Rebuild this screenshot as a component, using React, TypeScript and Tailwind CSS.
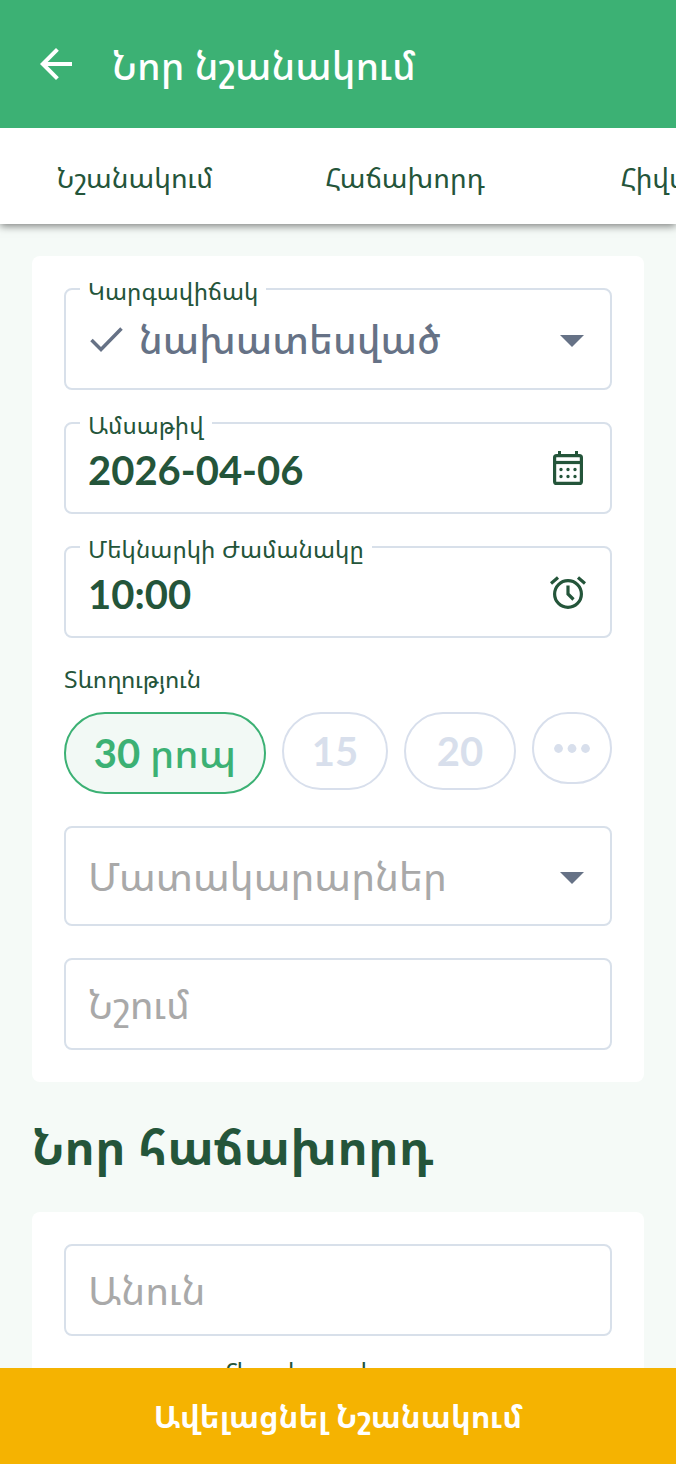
import { useState } from 'react';
import type { ReactNode } from 'react';

const TABS = ['Նշանակում', 'Հաճախորդ', 'Հիվանդ'];

const INPUT =
  'w-full min-w-0 bg-transparent text-[40px] leading-[48px] outline-none placeholder:text-[#a9a9a9] placeholder:opacity-100';

function Field({ id, label, className, children }: {
  id: string;
  label?: string;
  className?: string;
  children: ReactNode;
}) {
  return (
    <div className={`relative flex items-center rounded-lg border-2 border-[#d8e0ea] px-[22px] ${className ?? 'h-[92px]'}`}>
      {label && (
        <label
          htmlFor={id}
          className="absolute -top-[15px] left-[14px] whitespace-nowrap bg-white px-2 text-2xl text-[#24553a]"
        >
          {label}
        </label>
      )}
      {children}
    </div>
  );
}

function Caret() {
  return (
    <svg viewBox="0 0 24 12" className="pointer-events-none absolute right-[26px] top-1/2 -mt-1 h-3 w-6 fill-[#667286]">
      <path d="M0 0h24L12 12z" />
    </svg>
  );
}

function CalendarIcon() {
  return (
    <svg viewBox="0 0 30 34" className="h-[34px] w-[30px]" fill="none" stroke="#24553a">
      <path d="M6.500 0v5M23.500 0v5" strokeWidth="3" />
      <rect x="1.600" y="4.600" width="26.800" height="27.800" rx="2" strokeWidth="3.200" />
      <path d="M1 11.500h28" strokeWidth="3.200" />
      <path d="M8 18.500h0M15 18.500h0M22 18.500h0M8 25.500h0M15 25.500h0M22 25.500h0" strokeWidth="3.400" strokeLinecap="round" />
    </svg>
  );
}

function AlarmIcon() {
  return (
    <svg viewBox="0 0 36 33" className="h-[33px] w-9" fill="none" stroke="#24553a" strokeWidth="3.200">
      <circle cx="18" cy="18" r="13.400" />
      <path d="M18 9.500v8.500l5.500 5.500" />
      <path d="M1 7.500l7-6M35 7.500l-7-6" />
    </svg>
  );
}

export default function App() {
  const [status, setStatus] = useState('planned');
  const [date, setDate] = useState('2026-04-06');
  const [time, setTime] = useState('10:00');
  const [duration, setDuration] = useState(30);
  const [provider, setProvider] = useState('');

  return (
    <div className='flex h-screen flex-col bg-[#f5faf7] font-["Noto_Sans_Armenian",Lato,sans-serif] text-[#24553a]'>
      <header className="relative z-20 flex h-32 shrink-0 items-center bg-[#3cb174] px-10 text-white">
        <button type="button" aria-label="Հետ" className="mr-10">
          <svg viewBox="4 4 16 16" className="h-8 w-8 fill-current">
            <path d="M20 11H7.830l5.590-5.590L12 4l-8 8 8 8 1.410-1.410L7.830 13H20v-2z" />
          </svg>
        </button>
        <h1 className="pt-0.5 text-[39px] font-medium leading-[48px]">Նոր նշանակում</h1>
      </header>

      <nav className="relative z-10 flex h-24 shrink-0 overflow-x-clip bg-white shadow-[0_2px_8px_rgba(0,0,0,0.5)]">
        {TABS.map((tab) => (
          <button key={tab} type="button" className="w-[270px] shrink-0 pt-0.5 text-[28px]">
            {tab}
          </button>
        ))}
      </nav>

      <main className="min-h-0 flex-1 overflow-y-auto px-8 pt-8 [scrollbar-width:none]">
        <section className="flex flex-col gap-8 rounded-lg bg-white p-8">
          <Field id="status" label="Կարգավիճակ" className="h-[102px]">
            <svg viewBox="0 0 33 25" className="ml-0.5 mr-4 h-[25px] w-[33px] shrink-0" fill="none" stroke="#667286" strokeWidth="3.500">
              <path d="M1.500 13l9.500 9.500L31.500 1.500" />
            </svg>
            <select
              id="status"
              value={status}
              onChange={(e) => setStatus(e.target.value)}
              className="w-full min-w-0 appearance-none bg-transparent text-[39px] font-medium leading-[60px] text-[#667286] outline-none"
            >
              <option value="planned">նախատեսված</option>
            </select>
            <Caret />
          </Field>

          <Field id="date" label="Ամսաթիվ">
            <input
              id="date"
              value={date}
              onChange={(e) => setDate(e.target.value)}
              className={`${INPUT} pt-1 font-[Lato] font-bold`}
            />
            <button type="button" aria-label="Ընտրել ամսաթիվ" className="mr-0.5 flex w-9 shrink-0 justify-center">
              <CalendarIcon />
            </button>
          </Field>

          <Field id="time" label="Մեկնարկի Ժամանակը">
            <input
              id="time"
              value={time}
              onChange={(e) => setTime(e.target.value)}
              className={`${INPUT} pt-1 font-[Lato] font-bold`}
            />
            <button type="button" aria-label="Ընտրել ժամ" className="mr-0.5 flex w-9 shrink-0 justify-center">
              <AlarmIcon />
            </button>
          </Field>

          <div>
            <p className="mb-6 text-2xl leading-[18px]">Տևողություն</p>
            <div className='flex items-start gap-4 font-[Lato,"Noto_Sans_Armenian",sans-serif] text-[40px] font-bold leading-[48px] text-[#d8dfec]'>
              <button
                type="button"
                aria-pressed={duration === 30}
                onClick={() => setDuration(30)}
                className="h-[82px] grow-[198] basis-0 whitespace-nowrap rounded-full border-2 border-[#3cb174] bg-[#f2f9f5] text-[#3cb174]"
              >
                30 <span className="font-medium">րոպ</span>
              </button>
              <button
                type="button"
                aria-pressed={duration === 15}
                onClick={() => setDuration(15)}
                className="h-[78px] grow-[102] basis-0 rounded-full border-2 border-[#d8dfec]"
              >
                15
              </button>
              <button
                type="button"
                aria-pressed={duration === 20}
                onClick={() => setDuration(20)}
                className="h-[78px] grow-[108] basis-0 rounded-full border-2 border-[#d8dfec]"
              >
                20
              </button>
              <button
                type="button"
                aria-label="Այլ"
                className="flex h-[72px] grow-[76] basis-0 items-center justify-center rounded-full border-2 border-[#d8dfec]"
              >
                <svg viewBox="0 0 36 9" className="h-[9px] w-9 fill-current">
                  <circle cx="4.500" cy="4.500" r="4.400" />
                  <circle cx="18" cy="4.500" r="4.400" />
                  <circle cx="31.500" cy="4.500" r="4.400" />
                </svg>
              </button>
            </div>
          </div>

          <Field id="provider" className="h-[100px]">
            <select
              id="provider"
              aria-label="Մատակարարներ"
              value={provider}
              onChange={(e) => setProvider(e.target.value)}
              className="w-full min-w-0 appearance-none bg-transparent text-[40px] leading-[60px] text-[#a9a9a9] outline-none"
            >
              <option value="">Մատակարարներ</option>
            </select>
            <Caret />
          </Field>

          <Field id="note">
            <input id="note" aria-label="Նշում" placeholder="Նշում" className={INPUT} />
          </Field>
        </section>

        <h2 className="py-10 text-5xl font-bold leading-[50px]">Նոր հաճախորդ</h2>

        <section className="flex flex-col gap-8 rounded-lg bg-white p-8">
          <Field id="name">
            <input id="name" aria-label="Անուն" placeholder="Անուն" className={INPUT} />
          </Field>
          <div className="pl-[136px]">
            <Field id="phone" label="Հեռախոսակ">
              <input id="phone" type="tel" className={INPUT} />
            </Field>
          </div>
        </section>
      </main>

      <footer className="relative z-10 shrink-0">
        <button type="submit" className="h-24 w-full bg-[#f5b301] text-[31px] font-bold text-white">
          Ավելացնել Նշանակում
        </button>
      </footer>
    </div>
  );
}
